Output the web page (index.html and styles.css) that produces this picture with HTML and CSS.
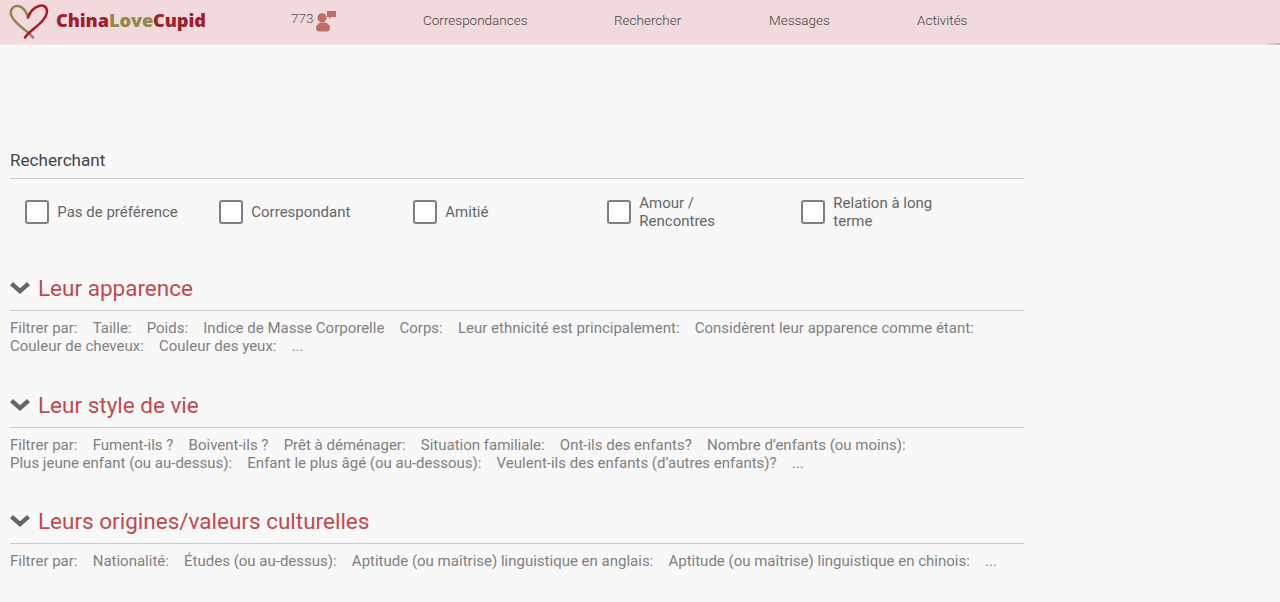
FILE: index.html
```html
<!DOCTYPE html>
<html lang="fr">
<head>
<meta charset="utf-8">
<title>ChinaLoveCupid</title>
<link rel="stylesheet" href="styles.css">
</head>
<body>
<header class="topbar">
  <a class="logo">
    <svg class="logo-mark" width="40" height="38" viewBox="9 0.5 40 38" fill="none">
      <path d="M33 37C28 30 13 23 11 14C10 8 14 5 18 5.5C23 6 26 11 28 16" stroke="#8f8a4c" stroke-width="2.6" stroke-linecap="round"/>
      <path d="M25 37C29 30 46 22 47 11C47 6 43 4 39 5.5C34 7 30 11 28 17" stroke="#a81f2a" stroke-width="2.6" stroke-linecap="round"/>
    </svg>
    <span class="logo-text"><span class="red">China</span><span class="olive">Love</span><span class="red">Cupid</span></span>
  </a>
  <div class="online">
    <span>773</span>
    <svg class="online-icon" width="21" height="21" viewBox="0 0 21 21">
      <circle cx="6" cy="6.8" r="4.6" fill="#bd6f66"/>
      <path d="M0 17C0 13.5 3 11.5 7 11.5S14 13.5 14 17C14 19.5 12.5 20.5 10.5 20.5H3.5C1.5 20.5 0 19.5 0 17Z" fill="#bd6f66"/>
      <path d="M11 0H20V6H15L13 8V6H11Z" fill="#bd6f66"/>
    </svg>
  </div>
  <nav class="nav">
    <a class="nav-matches">Correspondances</a>
    <a class="nav-search">Rechercher</a>
    <a class="nav-messages">Messages</a>
    <a class="nav-activity">Activités</a>
  </nav>
</header>
<main class="content">
  <section class="seeking">
    <h2 class="seeking-title">Recherchant</h2>
    <div class="options">
      <label class="option"><span class="box"></span><span>Pas de préférence</span></label>
      <label class="option"><span class="box"></span><span>Correspondant</span></label>
      <label class="option"><span class="box"></span><span>Amitié</span></label>
      <label class="option"><span class="box"></span><span>Amour / Rencontres</span></label>
      <label class="option"><span class="box"></span><span>Relation à long terme</span></label>
    </div>
  </section>
  <section class="filter">
    <h2 class="filter-title"><svg class="chevron" width="20" height="12" viewBox="0 0 20 12"><path d="M0 3.2L3 0L10 6.3L17 0L20 3.2L10 12Z" fill="#666"/></svg>Leur apparence</h2>
    <div class="filter-items">
      <span>Filtrer par:</span><span>Taille:</span><span>Poids:</span><span>Indice de Masse Corporelle</span><span>Corps:</span><span>Leur ethnicité est principalement:</span><span>Considèrent leur apparence comme étant:</span><span>Couleur de cheveux:</span><span>Couleur des yeux:</span><span>...</span>
    </div>
  </section>
  <section class="filter">
    <h2 class="filter-title"><svg class="chevron" width="20" height="12" viewBox="0 0 20 12"><path d="M0 3.2L3 0L10 6.3L17 0L20 3.2L10 12Z" fill="#666"/></svg>Leur style de vie</h2>
    <div class="filter-items">
      <span>Filtrer par:</span><span>Fument-ils ?</span><span>Boivent-ils ?</span><span>Prêt à déménager:</span><span>Situation familiale:</span><span>Ont-ils des enfants?</span><span>Nombre d’enfants (ou moins):</span><span>Plus jeune enfant (ou au-dessus):</span><span>Enfant le plus âgé (ou au-dessous):</span><span>Veulent-ils des enfants (d’autres enfants)?</span><span>...</span>
    </div>
  </section>
  <section class="filter">
    <h2 class="filter-title"><svg class="chevron" width="20" height="12" viewBox="0 0 20 12"><path d="M0 3.2L3 0L10 6.3L17 0L20 3.2L10 12Z" fill="#666"/></svg>Leurs origines/valeurs culturelles</h2>
    <div class="filter-items">
      <span>Filtrer par:</span><span>Nationalité:</span><span>Études (ou au-dessus):</span><span>Aptitude (ou maîtrise) linguistique en anglais:</span><span>Aptitude (ou maîtrise) linguistique en chinois:</span><span>...</span>
    </div>
  </section>
</main>
</body>
</html>
```
FILE: styles.css
```css
* { box-sizing: border-box; }
html, body { margin: 0; height: 100%; overflow: hidden; }
body { background: #f8f8f8; font-family: Roboto, "Liberation Sans", sans-serif; color: #666; }
.topbar { height: 44px; background: #f1d9dc; display: flex; align-items: center; position: relative; box-shadow: 0 1px 0 #f6e6e8; }
.topbar::after { content: ""; position: absolute; right: 0; top: 43px; width: 16px; height: 2px; background: linear-gradient(to right, rgba(190,160,170,0), rgba(190,160,170,.7)); }
.logo { display: flex; align-items: center; margin-left: 9px; width: 282px; height: 44px; }
.logo-mark { flex: none; margin-top: -5px; }
.logo-text { font-family: "Open Sans", sans-serif; font-weight: 800; font-size: 18.2px; letter-spacing: -.1px; margin-left: 7px; margin-top: -5px; }
.red { color: #a01e2b; }
.olive { color: #8f8a4c; }
.online { display: flex; align-items: flex-start; width: 132px; font-size: 13.5px; font-weight: 300; color: #555; height: 44px; padding-top: 10px; gap: 3px; }
.online-icon { margin-top: 1px; }
.nav { display: flex; font-size: 13.5px; font-weight: 300; color: #444; margin-top: -4px; }
.nav a { display: block; }
.nav-matches { width: 191px; }
.nav-search { width: 155px; }
.nav-messages { width: 148px; }
.content { width: 1014px; margin-left: 10px; padding-top: 106px; }
.seeking-title { margin: 0; font-size: 17.1px; font-weight: 400; line-height: 20px; color: #444; padding-bottom: 8px; border-bottom: 1px solid #ccc; }
.options { display: flex; padding: 14px 0 0 15.3px; height: 95px; }
.option { width: 194px; display: flex; align-items: center; align-self: flex-start; gap: 8px; font-size: 15px; line-height: 18px; color: #666; height: 38px; }
.option span:last-child { width: 110px; flex: none; }
.option:nth-child(1) span:last-child { width: 130px; }
.box { width: 24px; height: 24px; flex: none; border: 2px solid #808080; border-radius: 3px; background: #fff; }
.filter { margin-bottom: 35.5px; }
.filter-title { margin: 0; display: flex; align-items: center; gap: 8px; font-size: 22.5px; font-weight: 400; line-height: 28px; color: #c04a4e; padding-bottom: 8px; border-bottom: 1px solid #ccc; }
.filter-items { display: flex; flex-wrap: wrap; column-gap: 15.2px; font-size: 15px; font-weight: 400; line-height: 18px; color: #808080; padding-top: 8px; height: 44px; }
```
